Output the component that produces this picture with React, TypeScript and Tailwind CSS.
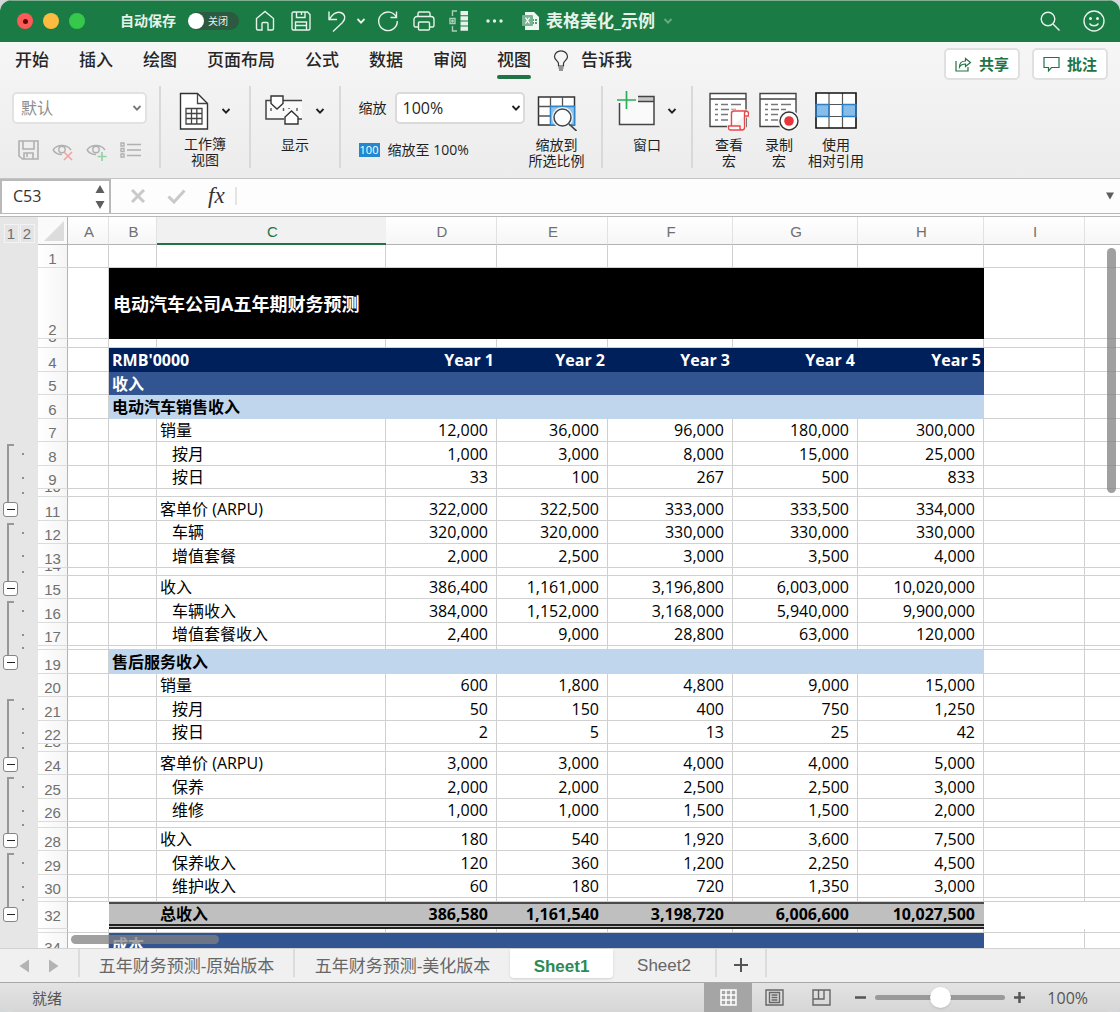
import React from "react";

const UI = "font-['Open_Sans','Noto_Sans_CJK_SC',sans-serif]";

const Chevron = ({ className = "" }: { className?: string }) => (
  <svg className={className} width="10" height="8" viewBox="0 0 10 8" fill="none" stroke="currentColor" strokeWidth="1.8" aria-hidden="true">
    <path d="M1.5 2 5 5.6 8.5 2" />
  </svg>
);

/* ---------- Title bar ---------- */

function BarButton({ label, children }: { label: string; children: React.ReactNode }) {
  return (
    <button aria-label={label} className="flex h-9 w-9 shrink-0 items-center justify-center">
      <svg width="24" height="24" viewBox="0 0 24 24" fill="none" stroke="currentColor" strokeWidth="1.4" aria-hidden="true">
        {children}
      </svg>
    </button>
  );
}

function TitleBar() {
  return (
    <header className="flex h-[42px] shrink-0 items-center border-t border-[#7fae92] bg-[#1b7b44] pb-px text-[#e6f2ea]">
      <div className="flex shrink-0 gap-[10px] pl-[17px]">
        <button aria-label="关闭窗口" className="flex h-4 w-4 items-center justify-center rounded-full bg-[#fc5b57]">
          <span className="h-[5px] w-[5px] rounded-full bg-[#5c0804]" />
        </button>
        <button aria-label="最小化" className="h-4 w-4 rounded-full bg-[#fdbb3f]" />
        <button aria-label="全屏" className="h-4 w-4 rounded-full bg-[#35c84a]" />
      </div>
      <span id="autosave" className="ml-[35px] w-[60px] shrink-0 text-[14px] font-bold leading-5">自动保存</span>
      <button
        role="switch"
        aria-checked="false"
        aria-labelledby="autosave"
        className="ml-2 mr-2 flex h-[18px] w-[51px] shrink-0 items-center rounded-full bg-[#2b5a40]"
      >
        <span className="h-4 w-4 rounded-full bg-white" />
        <span className="ml-1 text-[10px] leading-4">关闭</span>
      </button>
      <BarButton label="主页">
        <path d="M3.5 19.5V9.500L12 2.500l8.500 7v10a1.500 1.500 0 0 1-1.500 1.500h-4v-6.500a1 1 0 0 0-1-1h-4a1 1 0 0 0-1 1V21H5a1.500 1.500 0 0 1-1.500-1.500z" />
      </BarButton>
      <BarButton label="保存">
        <path d="M3 4.500A1.500 1.500 0 0 1 4.500 3h14L21 5.500v14a1.500 1.500 0 0 1-1.500 1.500h-15A1.500 1.500 0 0 1 3 19.500zM7.500 3v5.500h8.500V3M12.500 3v3M6.500 21v-8h11v8M6.500 16.500h11" />
      </BarButton>
      <BarButton label="撤消">
        <path d="M4 2.500v8h8M4.500 10C8 4.500 12 2.500 15.500 3.500c5 1.500 5.500 6.500 2 10L8 22.500" />
      </BarButton>
      <button aria-label="撤消列表" className="flex h-9 w-3 shrink-0 items-center justify-center">
        <Chevron />
      </button>
      <span className="w-[3px]" />
      <BarButton label="恢复">
        <path d="M20.500 8.500A9.300 9.300 0 1 0 21.300 12M20.500 2.500v6h-6" />
      </BarButton>
      <BarButton label="打印">
        <path d="M6 7.500V4.500A1.500 1.500 0 0 1 7.500 3h9A1.500 1.500 0 0 1 18 4.500v3M6 18H3.500A1.500 1.500 0 0 1 2 16.500v-6a3 3 0 0 1 3-3h14a3 3 0 0 1 3 3v6a1.500 1.500 0 0 1-1.500 1.500H18M7.500 13h9a1 1 0 0 1 1 1v6a1 1 0 0 1-1 1h-9a1 1 0 0 1-1-1v-6a1 1 0 0 1 1-1z" />
      </BarButton>
      <BarButton label="分级显示">
        <path d="M9 2H4.500v5M4.500 17v5H9M2 9.500h5v5H2zM4.500 10.500v3M3 12h3" opacity=".7" />
        <path d="M12.500 2h7.500v4.200h-7.500zM12.500 7.200h7.500v4.200h-7.500zM12.500 12.400h7.500v4.200h-7.500zM12.500 17.600h7.500v4.200h-7.500z" fill="currentColor" stroke="none" />
      </BarButton>
      <BarButton label="更多">
        <g fill="currentColor" stroke="none">
          <circle cx="4" cy="12" r="1.700" />
          <circle cx="10.500" cy="12" r="1.700" />
          <circle cx="17" cy="12" r="1.700" />
        </g>
      </BarButton>
      <div className="ml-2 flex shrink-0 items-center text-[17px] leading-6">
        <svg width="18" height="20" viewBox="0 0 18 20" aria-hidden="true">
          <path d="M3 1h9l5 5v13H3z" fill="#eef7f1" />
          <path d="M10 8h2v2h-2zM13 8h2v2h-2zM10 11h2v2h-2zM13 11h2v2h-2z" fill="#4f9c70" />
          <rect y="4" width="11" height="11" rx="1" fill="#79b492" />
          <path d="M3.500 6.500 7.500 12.500M7.500 6.500 3.500 12.500" stroke="#fff" strokeWidth="1.300" />
        </svg>
        <h1 className="ml-[6px] font-bold">表格美化_示例</h1>
        <Chevron className="ml-2 opacity-40" />
      </div>
      <div className="ml-auto flex gap-2 pr-2">
        <BarButton label="搜索">
          <circle cx="10" cy="10" r="6.800" />
          <path d="m15 15 6.500 6.500" />
        </BarButton>
        <BarButton label="反馈">
          <circle cx="12" cy="12" r="10" />
          <path d="M7.500 14.500c2 3 7 3 9 0" />
          <circle cx="8.500" cy="9.500" r=".8" fill="currentColor" />
          <circle cx="15.500" cy="9.500" r=".8" fill="currentColor" />
        </BarButton>
      </div>
    </header>
  );
}

/* ---------- Ribbon ---------- */

const tabs = ["开始", "插入", "绘图", "页面布局", "公式", "数据", "审阅", "视图"];

function RibbonTabs() {
  return (
    <nav className="flex h-11 items-center pl-[15px] text-[17px] leading-6 text-[#262626]">
      <div className="flex gap-[30px] self-start pt-[6px]">
        {tabs.map((t) => (
          <button key={t} className="flex flex-col font-medium">
            {t}
            {t === "视图" && <span className="mt-[3px] h-1 w-full rounded-full bg-[#217346]" />}
          </button>
        ))}
      </div>
      <button className="ml-[22px] flex items-center gap-3 self-start pt-[6px] font-medium">
        <svg width="16" height="21" viewBox="0 0 15 21" fill="none" stroke="#333" strokeWidth="1.200" aria-hidden="true">
          <path d="M5 16v-2.500C5 11 1 10 1 6.800a6.500 6 0 0 1 13 0C14 10 10 11 10 13.500V16zM5 18h5M5.500 20h4" />
        </svg>
        告诉我
      </button>
      <div className="ml-auto flex gap-3 pr-3 text-[15px] font-bold leading-5 text-[#217346]">
        <button className="flex h-8 w-[76px] items-center justify-center gap-[7px] rounded-[5px] border-2 border-[#e0e0e0] bg-white">
          <svg width="17" height="17" viewBox="0 0 17 17" fill="none" stroke="currentColor" strokeWidth="1.200" aria-hidden="true">
            <path d="M1 6v10h12v-4M4.500 12c0-4 2.500-6 6-6V3.500L15.500 7.500l-5 4V9c-3 0-4.500.5-6 3z" transform="translate(0 -1)" />
          </svg>
          共享
        </button>
        <button className="flex h-8 w-[76px] items-center justify-center gap-[7px] rounded-[5px] border-2 border-[#e0e0e0] bg-white">
          <svg width="17" height="17" viewBox="0 0 17 17" fill="none" stroke="currentColor" strokeWidth="1.200" aria-hidden="true">
            <path d="M1 1.500h15v10H8.500L5.500 15v-3.500H1z" />
          </svg>
          批注
        </button>
      </div>
    </nav>
  );
}

function RibbonButton({ lines, icon, chevron = false }: { lines: string[]; icon: React.ReactNode; chevron?: boolean }) {
  return (
    <button className="flex flex-col items-center">
      <span className="flex h-[42px] items-center gap-3">
        {icon}
        {chevron && <Chevron />}
      </span>
      <span className="mt-[5px] block text-[14px] leading-4">
        {lines.map((l) => (
          <span key={l} className="block">{l}</span>
        ))}
      </span>
    </button>
  );
}

const macroSheet = (
  <>
    <path d="M1 2.500h36v33H1z" fill="#fff" />
    <path d="M1 2.500h36v33H1zM1 8h36" stroke="#444" strokeWidth="1.400" />
    <path d="M6 13.500h3M12 13.500h7M22 13.500h10M6 18.500h3M12 18.500h8M22 18.500h5M6 23.500h3M12 23.500h7M6 29h3M12 29h7" stroke="#777" strokeWidth="1.300" />
  </>
);

const svg = (w: number, children: React.ReactNode, vb = 40) => (
  <svg width={w} height="40" viewBox={`0 0 ${vb} 40`} fill="none" aria-hidden="true">{children}</svg>
);

function Ribbon() {
  const group = "flex h-[82px] shrink-0 justify-center border-r-2 border-[#d9d9d9]";
  return (
    <section aria-label="视图" className="shrink-0 border-b border-[#c4c4c4] bg-gradient-to-b from-[#f6f6f6] to-[#ececec]">
      <RibbonTabs />
      <div className="flex h-[92px] text-[#1f1f1f]">
        <div className={`${group} w-[161px]`}>
          <div className="w-full pl-3 pt-[6px]">
            <div className="relative w-[135px]">
              <select aria-label="工作表视图" defaultValue="默认" className="h-8 w-full appearance-none rounded-[5px] border-2 border-[#e2e2e2] bg-white pl-[7px] text-[16px] leading-5 text-[#8c8c8c]">
                <option>默认</option>
              </select>
              <Chevron className="pointer-events-none absolute right-[5px] top-3 text-[#777]" />
            </div>
            <div className="mt-[15px] flex gap-[13px] pl-[6px] text-[#b0b0b0]">
              <button aria-label="保留">
                <svg width="21" height="22" viewBox="0 0 21 22" fill="none" stroke="currentColor" strokeWidth="1.600" aria-hidden="true">
                  <path d="M1 2h19v18H4.500L1 17zM5 2v8h11V2M6 20v-6h9v6M9 14v4" />
                </svg>
              </button>
              <button aria-label="退出">
                <svg width="21" height="22" viewBox="0 0 21 22" fill="none" stroke="currentColor" strokeWidth="1.400" aria-hidden="true">
                  <path d="M1 11C5 5 15 5 19 11M1 11c2 3 5 4.500 9 4.500" />
                  <circle cx="10" cy="10.500" r="3.200" />
                  <path d="m12 13 8 8M20 13l-8 8" stroke="#f2a3a3" strokeWidth="1.700" />
                </svg>
              </button>
              <button aria-label="新建">
                <svg width="21" height="22" viewBox="0 0 21 22" fill="none" stroke="currentColor" strokeWidth="1.400" aria-hidden="true">
                  <path d="M1 11C5 5 15 5 19 11M1 11c2 3 5 4.500 9 4.500" />
                  <circle cx="10" cy="10.500" r="3.200" />
                  <path d="M16 13v9M11.500 17.500h9" stroke="#93d3a2" strokeWidth="1.700" />
                </svg>
              </button>
              <button aria-label="选项">
                <svg width="21" height="22" viewBox="0 0 21 22" fill="none" stroke="currentColor" strokeWidth="1.400" aria-hidden="true">
                  <path d="M1 4h3v3H1zM1 9.500h3v3H1zM1 15h3v3H1zM7 5.500h14M7 11h14M7 16.500h14" />
                </svg>
              </button>
            </div>
          </div>
        </div>
        <div className={`${group} w-[90px] pt-1`}>
          <RibbonButton
            chevron
            lines={["工作簿", "视图"]}
            icon={svg(30, (
              <>
                <path d="M1.500 2.500h17l10 10v25.500h-27z" fill="#fff" stroke="#333" strokeWidth="1.400" />
                <path d="M18.500 2.500v10h10M7 17.500h16V33H7zM7 22.500h16M7 27.500h16M12.500 17.500V33M17.800 17.500V33" stroke="#444" strokeWidth="1.300" />
              </>
            ), 30)}
          />
        </div>
        <div className={`${group} w-[90px] pt-1`}>
          <RibbonButton
            chevron
            lines={["显示"]}
            icon={svg(38, (
              <>
                <path d="M1.800 10.200h35v17h-35z" fill="#fafafa" />
                <path d="M6 9.500H1V28h18M18 9.500h19M33 28h4" stroke="#444" strokeWidth="1.500" />
                <path d="M6 5h12v7.500l-6 5.500-6-5.500zM20 33v-7l6.500-6 6.500 6v7z" fill="#fff" stroke="#333" strokeWidth="1.400" />
                <path d="M6 17v3M18.500 17v3M24 17v1M32 17v3" stroke="#555" strokeWidth="1.400" />
              </>
            ), 38)}
          />
        </div>
        <div className={`${group} w-[262px]`}>
          <div className="pl-px pt-[6px]">
            <div className="flex h-8 items-center gap-2">
              <label htmlFor="zoom" className="text-[14px] leading-5">缩放</label>
              <div className="relative w-[130px]">
                <select id="zoom" defaultValue="100%" className="h-8 w-full appearance-none rounded-[5px] border-2 border-[#dadada] bg-white pl-[6px] text-[16px] leading-5">
                  <option>100%</option>
                </select>
                <Chevron className="pointer-events-none absolute right-1 top-3" />
              </div>
            </div>
            <button className="mt-4 flex items-center gap-2 text-[14px] leading-5">
              <span className="flex h-[14px] w-[21px] items-center justify-center bg-[#2488cf] text-[11px] leading-[14px] text-white">100</span>
              缩放至 100%
            </button>
          </div>
          <div className="ml-1 pt-1">
            <RibbonButton
              lines={["缩放到", "所选比例"]}
              icon={svg(40, (
                <>
                  <path d="M1.500 6h36v28h-36z" fill="#fff" stroke="#333" strokeWidth="1.500" />
                  <path d="M1.500 15.500h36M1.500 25h36M13.500 6v28M25.500 6v9.500" stroke="#555" strokeWidth="1.300" />
                  <path d="M13.500 15.500h24V34h-24z" fill="#8fc3ea" stroke="#2f86cc" strokeWidth="1.300" />
                  <circle cx="25.500" cy="26.500" r="10.500" fill="#f4f6f8" />
                  <circle cx="25.500" cy="26.500" r="8.500" fill="#fafcfe" stroke="#444" strokeWidth="1.500" />
                  <path d="m32 33 7.500 7" stroke="#444" strokeWidth="1.600" />
                </>
              ))}
            />
          </div>
        </div>
        <div className={`${group} w-[90px] pt-1`}>
          <RibbonButton
            chevron
            lines={["窗口"]}
            icon={svg(38, (
              <>
                <path d="M3 12v21.500h34V5.500H20V10z" fill="#fafafa" />
                <path d="M21 5.500h16v4.500H21z" fill="#c8c8c8" />
                <path d="M2.500 12v21.500H37V5.500H21M21 10.500h16" stroke="#444" strokeWidth="1.500" />
                <path d="M9.500 0v18M0 9h19" stroke="#2cae57" strokeWidth="1.700" />
              </>
            ), 38)}
          />
        </div>
        <div className="flex gap-[10px] pl-4 pt-1">
          <RibbonButton
            lines={["查看", "宏"]}
            icon={svg(40, (
              <>
                {macroSheet}
                <path d="M21 18.500h19v8h-3V41H18v-7h3z" fill="#f4f4f4" />
                <path d="M22.500 35V22.500a2.500 2.500 0 0 1 2.500-2.500h12a2.500 2.500 0 0 1 2.500 2.500v2.500h-4M35.500 25v-2.500A2.500 2.500 0 0 1 37 20M35.500 25v11.500a2.500 2.500 0 0 1-2.500 2.500H21a2 2 0 0 1-1.500-2v-2H31v2a2 2 0 0 0 2 2" fill="#fff" stroke="#e8484c" strokeWidth="1.400" />
              </>
            ))}
          />
          <RibbonButton
            lines={["录制", "宏"]}
            icon={svg(40, (
              <>
                {macroSheet}
                <circle cx="30" cy="30" r="11" fill="#f4f4f4" />
                <circle cx="30" cy="30" r="9" fill="#fff" stroke="#333" strokeWidth="1.400" />
                <circle cx="30" cy="30" r="4.800" fill="#e8363a" />
              </>
            ))}
          />
          <div className="-ml-px">
            <RibbonButton
              lines={["使用", "相对引用"]}
              icon={svg(42, (
                <>
                  <path d="M1 2h40v35H1z" fill="#fff" />
                  <path d="M1 13.500h13v12H1zM27.500 13.500H41v12H27.500z" fill="#86bdea" />
                  <path d="M14 2v35M27.500 2v35M1 13.500h40M1 25.500h40" stroke="#555" strokeWidth="1.200" />
                  <path d="M1 2h40v35H1z" stroke="#111" strokeWidth="1.600" />
                  <path d="M1 13.500h13v12H1zM27.500 13.500H41v12H27.500z" stroke="#2c7fc4" strokeWidth="1.400" />
                </>
              ), 42)}
            />
          </div>
        </div>
      </div>
    </section>
  );
}

/* ---------- Formula bar ---------- */

function FormulaBar() {
  return (
    <div className="flex h-[38px] shrink-0 items-stretch border-b-4 border-double border-[#b9b9b9] bg-[#fdfdfd] text-[#555]">
      <div className="flex w-[111px] shrink-0 items-center border-2 border-b-0 border-[#b9b9b9] bg-white">
        <input aria-label="名称框" defaultValue="C53" className="w-20 pb-[3px] pl-[11px] text-[16px] leading-5 text-[#333] outline-none" />
        <button aria-label="选择名称" className="ml-3">
          <svg width="12" height="24" viewBox="0 0 10 24" fill="#5e5e5e" aria-hidden="true">
            <path d="M5 0 9.500 8h-9zM5 24l4.500-8h-9z" />
          </svg>
        </button>
      </div>
      <div className="my-2 flex shrink-0 items-center border-r-2 border-[#e4e4e4] pl-5 pr-[10px] text-[#c9c9c9]">
        <button aria-label="取消">
          <svg width="14" height="14" viewBox="0 0 14 14" fill="none" stroke="currentColor" strokeWidth="3" aria-hidden="true">
            <path d="m1 1 12 12M13 1 1 13" />
          </svg>
        </button>
        <button aria-label="输入" className="ml-[22px]">
          <svg width="19" height="15" viewBox="0 0 19 15" fill="none" stroke="currentColor" strokeWidth="3" aria-hidden="true">
            <path d="m1.500 7.500 5.500 5.500L17.500 1.500" />
          </svg>
        </button>
        <button aria-label="插入函数" className="ml-[22px] font-['Liberation_Serif',serif] text-[23px] italic leading-6 text-[#333]">fx</button>
      </div>
      <input aria-label="编辑栏" className="min-w-0 flex-1 bg-transparent px-2 outline-none" />
      <button aria-label="展开编辑栏" className="px-[5px]">
        <svg width="10" height="8" viewBox="0 0 10 8" fill="#5e5e5e" aria-hidden="true">
          <path d="M1 .5h8L5 7.500z" />
        </svg>
      </button>
    </div>
  );
}

/* ---------- Sheet ---------- */

type Outline = "start" | "mid" | "end";
type Row = {
  n: number;
  h: string;
  o?: Outline;
  kind?: "title" | "years" | "section" | "sub" | "total" | "gap";
  label?: string;
  indent?: boolean;
  v?: string[];
};

const S = "h-[23px]";
const T = "h-[24px]";

const rows: Row[] = [
  { n: 1, h: S },
  { n: 2, h: "h-[71px]", kind: "title", label: "电动汽车公司A五年期财务预测" },
  { n: 3, h: "h-[9px]", kind: "gap" },
  { n: 4, h: T, kind: "years", label: "RMB'0000", v: ["Year 1", "Year 2", "Year 3", "Year 4", "Year 5"] },
  { n: 5, h: S, kind: "section", label: "收入" },
  { n: 6, h: T, kind: "sub", label: "电动汽车销售收入" },
  { n: 7, h: S, label: "销量", v: ["12,000", "36,000", "96,000", "180,000", "300,000"] },
  { n: 8, h: T, o: "start", indent: true, label: "按月", v: ["1,000", "3,000", "8,000", "15,000", "25,000"] },
  { n: 9, h: S, o: "mid", indent: true, label: "按日", v: ["33", "100", "267", "500", "833"] },
  { n: 10, h: "h-[8px]", o: "mid", kind: "gap" },
  { n: 11, h: T, o: "end", label: "客单价 (ARPU)", v: ["322,000", "322,500", "333,000", "333,500", "334,000"] },
  { n: 12, h: S, o: "start", indent: true, label: "车辆", v: ["320,000", "320,000", "330,000", "330,000", "330,000"] },
  { n: 13, h: T, o: "mid", indent: true, label: "增值套餐", v: ["2,000", "2,500", "3,000", "3,500", "4,000"] },
  { n: 14, h: "h-[8px]", o: "mid", kind: "gap" },
  { n: 15, h: S, o: "end", label: "收入", v: ["386,400", "1,161,000", "3,196,800", "6,003,000", "10,020,000"] },
  { n: 16, h: T, o: "start", indent: true, label: "车辆收入", v: ["384,000", "1,152,000", "3,168,000", "5,940,000", "9,900,000"] },
  { n: 17, h: S, o: "mid", indent: true, label: "增值套餐收入", v: ["2,400", "9,000", "28,800", "63,000", "120,000"] },
  { n: 18, h: "h-[4px]", o: "mid", kind: "gap" },
  { n: 19, h: T, o: "end", kind: "sub", label: "售后服务收入" },
  { n: 20, h: S, label: "销量", v: ["600", "1,800", "4,800", "9,000", "15,000"] },
  { n: 21, h: T, o: "start", indent: true, label: "按月", v: ["50", "150", "400", "750", "1,250"] },
  { n: 22, h: S, o: "mid", indent: true, label: "按日", v: ["2", "5", "13", "25", "42"] },
  { n: 23, h: "h-[8px]", o: "mid", kind: "gap" },
  { n: 24, h: S, o: "end", label: "客单价 (ARPU)", v: ["3,000", "3,000", "4,000", "4,000", "5,000"] },
  { n: 25, h: T, o: "start", indent: true, label: "保养", v: ["2,000", "2,000", "2,500", "2,500", "3,000"] },
  { n: 26, h: S, o: "mid", indent: true, label: "维修", v: ["1,000", "1,000", "1,500", "1,500", "2,000"] },
  { n: 27, h: "h-[6px]", o: "mid", kind: "gap" },
  { n: 28, h: S, o: "end", label: "收入", v: ["180", "540", "1,920", "3,600", "7,500"] },
  { n: 29, h: T, o: "start", indent: true, label: "保养收入", v: ["120", "360", "1,200", "2,250", "4,500"] },
  { n: 30, h: S, o: "mid", indent: true, label: "维护收入", v: ["60", "180", "720", "1,350", "3,000"] },
  { n: 31, h: "h-[4px]", o: "mid", kind: "gap" },
  { n: 32, h: "h-[27px]", o: "end", kind: "total", label: "总收入", v: ["386,580", "1,161,540", "3,198,720", "6,006,600", "10,027,500"] },
  { n: 33, h: "h-[4px]", kind: "gap" },
  { n: 34, h: T, kind: "section", label: "成本" },
];

const grid = "border-r border-b border-[#d0d0d0]";

function OutlineCell({ row }: { row: Row }) {
  const { o, h } = row;
  if (!o) return <td className="bg-[#e6e6e6] p-0" />;
  if (o === "end")
    return (
      <td className="bg-[#e6e6e6] p-0 align-top">
        <div className="ml-[7px] h-[5px] w-2 border-l-2 border-[#979797]" />
        <button aria-label={`折叠第 ${row.n} 行的分组`} className="ml-[3px] flex h-[15px] w-[15px] items-center justify-center rounded-[3px] border border-[#858585] bg-white">
          <span className="h-px w-2 bg-[#222]" />
        </button>
      </td>
    );
  return (
    <td className="bg-[#e6e6e6] p-0 align-top">
      <div className={`${h} flex items-center pl-[7px]`}>
        <span className={o === "start" ? "mt-[2px] w-[7px] self-stretch border-l-2 border-t-2 border-[#979797]" : "w-[7px] self-stretch border-l-2 border-[#979797]"} />
        <span className="ml-2 h-[2px] w-[2px] bg-[#8f8f8f]" />
      </div>
    </td>
  );
}

function DataCells({ row }: { row: Row }) {
  const { kind, label, v = [] } = row;
  const side = kind === "total" ? "p-0" : `${grid} p-0`;
  const tail = (
    <>
      <td className={side} />
      <td className={kind === "total" ? "p-0" : "border-b border-[#d0d0d0] p-0"} />
    </>
  );
  if (kind === "title")
    return <><td className={side} /><td colSpan={7} className="bg-black py-0 pl-1 text-[18px] font-bold text-white">{label}</td>{tail}</>;
  if (kind === "section")
    return <><td className={side} /><td colSpan={7} className="bg-[#325592] py-0 pl-[3px] font-bold text-white">{label}</td>{tail}</>;
  if (kind === "sub")
    return <><td className={side} /><td colSpan={7} className="bg-[#c0d6ec] py-0 pl-[3px] font-bold">{label}</td>{tail}</>;
  if (kind === "years")
    return (
      <>
        <td className={side} />
        <td colSpan={2} className="bg-[#00205c] py-0 pl-[3px] font-bold text-white">{label}</td>
        {v.map((x) => <td key={x} className="bg-[#00205c] py-0 pr-[3px] text-right font-bold text-white">{x}</td>)}
        {tail}
      </>
    );
  if (kind === "total") {
    const c = "border-t-2 border-b-5 border-t-[#4a4a4a] border-b-[#222] [border-bottom-style:double] bg-[#bfbfbf] py-0 font-bold";
    return (
      <>
        <td className={side} />
        <td className={c} />
        <td className={`${c} pl-[3px]`}>{label}</td>
        {v.map((x) => <td key={x} className={`${c} pr-[9px] text-right`}>{x}</td>)}
        {tail}
      </>
    );
  }
  return (
    <>
      <td className={side} />
      <td className={side} />
      <td className={`${grid} py-0 ${row.indent ? "pl-[15px]" : "pl-[3px]"}`}>{label}</td>
      {[0, 1, 2, 3, 4].map((i) => <td key={i} className={`${grid} py-0 pr-2 text-right`}>{v[i]}</td>)}
      {tail}
    </>
  );
}

function Sheet() {
  return (
    <main className="relative min-h-0 flex-1 overflow-hidden bg-white">
      <table className="w-full table-fixed border-separate border-spacing-0 text-[16px] leading-5 text-black">
        <colgroup>
          <col className="w-[38px]" />
          <col className="w-[30px]" />
          <col className="w-[41px]" />
          <col className="w-[48px]" />
          <col className="w-[229px]" />
          <col className="w-[111px]" />
          <col className="w-[111px]" />
          <col className="w-[125px]" />
          <col className="w-[125px]" />
          <col className="w-[126px]" />
          <col className="w-[101px]" />
          <col />
        </colgroup>
        <thead>
          <tr className="h-7 font-['Liberation_Sans','Noto_Sans_CJK_SC',sans-serif] text-[15px] text-[#707070]">
            <td className="bg-[#e6e6e6] p-0 pt-1">
              <div className="flex justify-center gap-px text-[15px] leading-[17px]">
                <button className="w-[15px] border border-[#f3f3f3] bg-[#e4e4e4]">1</button>
                <button className="w-[15px] border border-[#f3f3f3] bg-[#e4e4e4]">2</button>
              </div>
            </td>
            <td className="border-b border-r border-[#b3b3b3] bg-[#fafafa] p-0">
              <button aria-label="全选" className="flex w-full justify-end pr-[3px]">
                <svg width="20" height="20" viewBox="0 0 20 20" aria-hidden="true"><path d="M20 0v20H0z" fill="#dcdcdc" /></svg>
              </button>
            </td>
            {["A", "B", "C", "D", "E", "F", "G", "H", "I"].map((c) => (
              <th
                key={c}
                scope="col"
                className={
                  c === "C"
                    ? "border-b-2 border-b-[#217346] bg-[#f1f1f1] pb-0 pl-[2px] pr-0 pt-1 font-normal text-[#217346]"
                    : "border-b border-r border-b-[#b3b3b3] border-r-[#e2e2e2] bg-gradient-to-b from-white to-[#f6f6f6] pb-0 pl-[2px] pr-0 pt-[3px] font-normal"
                }
              >
                {c}
              </th>
            ))}
            <td className="border-b border-[#b3b3b3] bg-gradient-to-b from-white to-[#f6f6f6] p-0" />
          </tr>
        </thead>
        <tbody>
          {rows.map((row) => (
            <tr key={row.n} className={row.h}>
              <OutlineCell row={row} />
              <th
                scope="row"
                className={`border-b border-r border-b-[#dcdcdc] border-r-[#b3b3b3] bg-gradient-to-r from-white to-[#f5f5f5] px-0 pt-0 font-['Liberation_Sans',sans-serif] text-[15px] font-normal leading-[17px] text-[#707070] ${row.kind === "gap" ? "pb-0 align-top" : row.kind === "total" ? "pb-1 align-bottom" : "pb-0 align-bottom"}`}
              >
                {row.kind !== "gap" ? (
                  row.n
                ) : row.h === "h-[8px]" || row.h === "h-[9px]" ? (
                  <span className="flex h-[6px] items-end justify-center overflow-hidden">{row.n}</span>
                ) : null}
              </th>
              <DataCells row={row} />
            </tr>
          ))}
        </tbody>
      </table>
      <div className="absolute right-1 top-[31px] h-[245px] w-[9px] rounded-full bg-[#808080]/75" />
      <div className="absolute bottom-1 left-[71px] h-[9px] w-[148px] rounded-full bg-[#808080]/75" />
    </main>
  );
}

/* ---------- Sheet tabs and status bar ---------- */

function SheetTabs() {
  const tab = "h-[28px] shrink-0 border-r-2 border-[#dcdcdc]";
  return (
    <nav aria-label="工作表" className="flex h-[34px] shrink-0 border-t border-[#d2d2d2] bg-[#f0f0f0] font-['Liberation_Sans','Noto_Sans_CJK_SC',sans-serif] text-[17px] leading-5 text-[#666]">
      <div className="flex h-[28px] w-20 shrink-0 items-center justify-center gap-5 border-r-2 border-[#dcdcdc] pt-[6px]">
        <button aria-label="上一个工作表">
          <svg width="10" height="14" viewBox="0 0 10 14" fill="#b3b3b3" aria-hidden="true"><path d="M10 .5v13L.5 7z" /></svg>
        </button>
        <button aria-label="下一个工作表">
          <svg width="10" height="14" viewBox="0 0 10 14" fill="#b3b3b3" aria-hidden="true"><path d="M0 .5v13L9.500 7z" /></svg>
        </button>
      </div>
      <button className={`${tab} w-[215px] pt-2`}>五年财务预测-原始版本</button>
      <button className="h-[28px] w-[215px] shrink-0 pt-2">五年财务预测-美化版本</button>
      <button aria-current="page" className="h-[29px] w-[103px] shrink-0 rounded-b-[4px] bg-white pt-[6px] font-bold text-[#2c8a55] shadow">Sheet1</button>
      <button className={`${tab} w-[104px] pt-[6px]`}>Sheet2</button>
      <button aria-label="新建工作表" className={`${tab} flex w-[50px] items-center justify-center pt-1`}>
        <svg width="14" height="14" viewBox="0 0 14 14" stroke="#555" strokeWidth="2" aria-hidden="true"><path d="M7 0v14M0 7h14" /></svg>
      </button>
    </nav>
  );
}

function StatusBar() {
  return (
    <footer className="flex h-[30px] shrink-0 items-center border-t border-[#a8a8a8] bg-gradient-to-b from-[#e3e3e3] to-[#d6d6d6] px-8 text-[15px] leading-5 text-[#555]">
      <span>就绪</span>
      <button aria-label="普通视图" className="ml-auto flex h-full w-12 items-center justify-center bg-[#a5a5a5]">
        <svg width="17" height="17" viewBox="0 0 17 17" fill="none" stroke="#fff" strokeWidth="1.500" aria-hidden="true">
          <path d="M1 1h15v15H1zM1 6h15M1 11h15M6 1v15M11 1v15" />
        </svg>
      </button>
      <button aria-label="页面布局" className="ml-[13px]">
        <svg width="19" height="17" viewBox="0 0 19 17" fill="none" stroke="#666" strokeWidth="1.400" aria-hidden="true">
          <path d="M1 1h17v15H1zM4.500 3.500h10v10h-10zM6.500 6h6M6.500 8.500h6M6.500 11h6" />
        </svg>
      </button>
      <button aria-label="分页预览" className="ml-7">
        <svg width="19" height="17" viewBox="0 0 19 17" fill="none" stroke="#666" strokeWidth="1.400" aria-hidden="true">
          <path d="M1 1h17v15H1zM1 10h11V1M6.500 1v9" />
        </svg>
      </button>
      <button aria-label="缩小" className="ml-6">
        <svg width="11" height="11" viewBox="0 0 11 11" stroke="#555" strokeWidth="2.500" aria-hidden="true"><path d="M0 5.500h11" /></svg>
      </button>
      <input
        type="range"
        aria-label="缩放比例"
        defaultValue={50}
        className="ml-[9px] h-5 w-[130px] appearance-none bg-transparent [&::-webkit-slider-runnable-track]:h-[5px] [&::-webkit-slider-runnable-track]:rounded-full [&::-webkit-slider-runnable-track]:bg-[#9a9a9a] [&::-webkit-slider-thumb]:-mt-2 [&::-webkit-slider-thumb]:h-[21px] [&::-webkit-slider-thumb]:w-[21px] [&::-webkit-slider-thumb]:appearance-none [&::-webkit-slider-thumb]:rounded-full [&::-webkit-slider-thumb]:bg-white [&::-webkit-slider-thumb]:shadow"
      />
      <button aria-label="放大" className="ml-[9px]">
        <svg width="11" height="11" viewBox="0 0 11 11" stroke="#555" strokeWidth="2.500" aria-hidden="true"><path d="M0 5.500h11M5.500 0v11" /></svg>
      </button>
      <span className="ml-[22px] text-[16px]">100%</span>
    </footer>
  );
}

export default function App() {
  return (
    <div className="bg-[#d5d8da]">
      <div className={`${UI} flex h-screen flex-col overflow-hidden rounded-[12px] bg-[#e6e6e6]`}>
        <TitleBar />
        <Ribbon />
        <FormulaBar />
        <Sheet />
        <SheetTabs />
        <StatusBar />
      </div>
    </div>
  );
}
